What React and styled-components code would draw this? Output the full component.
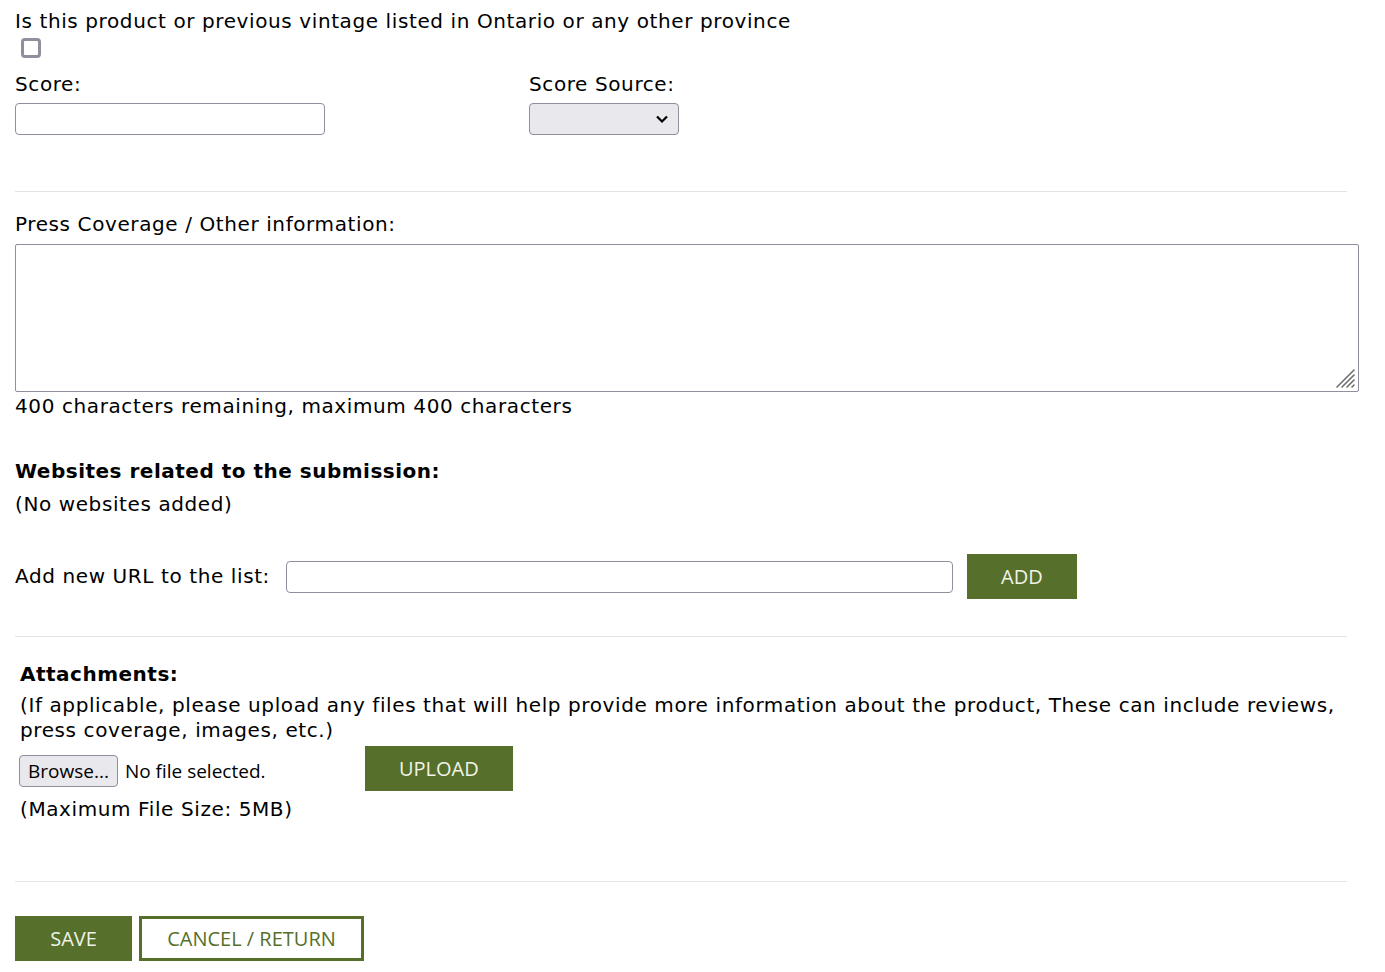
import styled, { createGlobalStyle } from "styled-components";

const GREEN = "#566f2b";

const Global = createGlobalStyle`
  html, body { margin: 0; padding: 0; background: #fff; }
  body {
    font-family: "DejaVu Sans", Verdana, sans-serif;
    font-size: 20px;
    line-height: 25px;
    letter-spacing: 0.6px;
    color: #000;
  }
`;

const Page = styled.form`
  width: 1344px;
  padding: 9px 15px 0;
`;

const Line = styled.div`
  margin-top: ${(p) => p.$mt || 0}px;
  font-weight: ${(p) => (p.$bold ? 700 : 400)};
  letter-spacing: ${(p) => (p.$bold ? "0.5px" : "inherit")};
`;

const Check = styled.input.attrs({ type: "checkbox" })`
  appearance: none;
  display: block;
  width: 20px;
  height: 20px;
  margin: 4px 0 0 6px;
  box-sizing: border-box;
  border: 3px solid #8f8f9d;
  border-radius: 4px;
  background: #fff;
`;

const ScoreRow = styled.div`
  display: grid;
  grid-template-columns: 514px 1fr;
  margin-top: 14px;
`;

const Field = styled.div`
  display: flex;
  flex-direction: column;
  gap: 6px;
  align-items: flex-start;
`;

const TextInput = styled.input.attrs({ type: "text" })`
  box-sizing: border-box;
  width: ${(p) => p.$w}px;
  height: 32px;
  border: 1px solid #8f8f9d;
  border-radius: 4px;
  background: #fff;
  padding: 0 6px;
  font: inherit;
`;

const SelectBox = styled.div`
  box-sizing: border-box;
  width: 150px;
  height: 32px;
  border: 1px solid #8f8f9d;
  border-radius: 4px;
  background: #e9e9ed;
  display: flex;
  align-items: center;
  justify-content: flex-end;
  padding-right: 9px;
`;

const Rule = styled.hr`
  width: 1332px;
  margin: ${(p) => p.$mt}px 0 0;
  border: none;
  border-top: 1px solid #e3e3e3;
  height: 0;
`;

const AreaWrap = styled.div`
  position: relative;
  width: 1344px;
  margin-top: 7px;
`;

const TextArea = styled.textarea`
  display: block;
  box-sizing: border-box;
  width: 1344px;
  height: 148px;
  border: 1px solid #8f8f9d;
  border-radius: 2px;
  font: inherit;
  resize: none;
`;

const Grip = styled.svg`
  position: absolute;
  right: 3px;
  bottom: 3px;
  pointer-events: none;
`;

const UrlRow = styled.div`
  display: flex;
  align-items: center;
  margin-top: 37px;
`;

const UrlLabel = styled.span`
  margin-right: 16px;
`;

const GreenButton = styled.button`
  box-sizing: border-box;
  height: 45px;
  width: ${(p) => p.$w}px;
  border: none;
  background: ${GREEN};
  color: #f1f3e6;
  font-family: "Open Sans", "Noto Sans", sans-serif;
  font-size: 20px;
  letter-spacing: 0;
  text-transform: uppercase;
  margin-left: ${(p) => p.$ml || 0}px;
  padding: 0;
`;

const OutlineButton = styled(GreenButton)`
  background: #fff;
  color: ${GREEN};
  border: 3px solid ${GREEN};
`;

const Attach = styled.div`
  padding-left: 5px;
`;

const UploadRow = styled.div`
  display: flex;
  align-items: center;
  margin-top: 3px;
`;

const Browse = styled.span`
  box-sizing: border-box;
  display: inline-flex;
  align-items: center;
  height: 32px;
  padding: 0 8px;
  margin-left: -1px;
  border: 1px solid #8f8f9d;
  border-radius: 4px;
  background: #e9e9ed;
  font-family: "Open Sans", "Noto Sans", sans-serif;
  font-size: 19px;
  letter-spacing: 0;
  margin-top: 5px;
`;

const FileName = styled.span`
  font-family: "Open Sans", "Noto Sans", sans-serif;
  font-size: 19px;
  letter-spacing: 0;
  margin-left: 7px;
  width: 240px;
  margin-top: 5px;
`;

const Actions = styled.div`
  display: flex;
  gap: 7px;
  margin-top: 34px;
`;

export default function App() {
  return (
    <>
      <Global />
      <Page onSubmit={(e) => e.preventDefault()}>
        <Line>Is this product or previous vintage listed in Ontario or any other province</Line>
        <Check />
        <ScoreRow>
          <Field>
            <span>Score:</span>
            <TextInput $w={310} />
          </Field>
          <Field>
            <span>Score Source:</span>
            <SelectBox>
              <svg width="14" height="10" viewBox="0 0 14 10">
                <path d="M2 2.5 L7 7.5 L12 2.5" fill="none" stroke="#000" strokeWidth="2.2" />
              </svg>
            </SelectBox>
          </Field>
        </ScoreRow>
        <Rule $mt={56} />
        <Line $mt={20}>Press Coverage / Other information:</Line>
        <AreaWrap>
          <TextArea />
          <Grip width="22" height="22" viewBox="0 0 22 22">
            <g stroke="#6d6d6d" strokeWidth="1.6" strokeLinecap="round">
              <line x1="3" y1="20" x2="20" y2="3" />
              <line x1="8" y1="20" x2="20" y2="8" />
              <line x1="13" y1="20" x2="20" y2="13" />
              <line x1="18" y1="20" x2="20" y2="18" />
            </g>
          </Grip>
        </AreaWrap>
        <Line $mt={2}>400 characters remaining, maximum 400 characters</Line>
        <Line $mt={40} $bold>Websites related to the submission:</Line>
        <Line $mt={8}>(No websites added)</Line>
        <UrlRow>
          <UrlLabel>Add new URL to the list:</UrlLabel>
          <TextInput $w={667} />
          <GreenButton type="button" $w={110} $ml={14}>Add</GreenButton>
        </UrlRow>
        <Rule $mt={37} />
        <Attach>
          <Line $mt={25} $bold>Attachments:</Line>
          <Line $mt={6}>
            (If applicable, please upload any files that will help provide more information about the product, These can include reviews, press coverage, images, etc.)
          </Line>
          <UploadRow>
            <Browse>Browse...</Browse>
            <FileName>No file selected.</FileName>
            <GreenButton type="button" $w={148}>Upload</GreenButton>
          </UploadRow>
          <Line $mt={6}>(Maximum File Size: 5MB)</Line>
        </Attach>
        <Rule $mt={59} />
        <Actions>
          <GreenButton type="button" $w={117}>Save</GreenButton>
          <OutlineButton type="button" $w={225}>Cancel / Return</OutlineButton>
        </Actions>
      </Page>
    </>
  );
}
